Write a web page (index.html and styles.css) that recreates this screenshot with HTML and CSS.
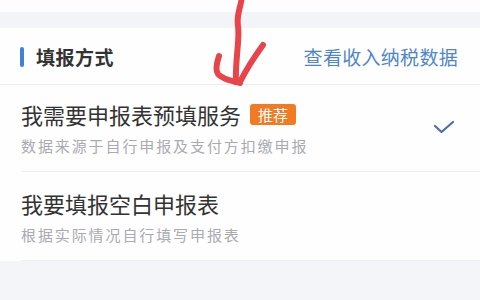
FILE: index.html
```html
<!DOCTYPE html>
<html lang="zh">
<head>
<meta charset="utf-8">
<link rel="stylesheet" href="styles.css">
</head>
<body>
<div class="page">
  <div class="topstrip"></div>
  <div class="band"></div>
  <section class="card">
    <div class="head">
      <div class="head-title"><span class="bar"></span>填报方式</div>
      <a class="head-link">查看收入纳税数据</a>
    </div>
    <div class="option option-first">
      <div class="texts">
        <div class="title">我需要申报表预填服务<span class="badge">推荐</span></div>
        <div class="sub">数据来源于自行申报及支付方扣缴申报</div>
      </div>
      <svg class="check" width="22" height="16" viewBox="0 0 22 16"><path d="M2 6 L8.5 12 L20 2" fill="none" stroke="#4a6db3" stroke-width="2.2" stroke-linecap="round" stroke-linejoin="round"/></svg>
    </div>
    <div class="option">
      <div class="texts">
        <div class="title">我要填报空白申报表</div>
        <div class="sub">根据实际情况自行填写申报表</div>
      </div>
    </div>
  </section>
  <div class="rest"></div>
  <svg class="arrow" width="480" height="120" viewBox="0 0 480 120">
    <path d="M242 -4 C241 8 236 14 238 26 C240 40 235 60 236 82" fill="none" stroke="#e8454b" stroke-width="6" stroke-linecap="round"/>
    <path d="M219 56 C217 62 215 70 218 74 C222 79 232 81 240 83" fill="none" stroke="#e8454b" stroke-width="6" stroke-linecap="round" stroke-linejoin="round"/>
    <path d="M263 45 C255 56 246 70 240 82" fill="none" stroke="#e8454b" stroke-width="6" stroke-linecap="round"/>
  </svg>
</div>
</body>
</html>
```
FILE: styles.css
```css
* { box-sizing: border-box; }
html, body { margin: 0; padding: 0; }
body {
  width: 480px;
  height: 300px;
  overflow: hidden;
  background: #f4f5f9;
  font-family: "Noto Sans CJK SC", "Noto Sans", sans-serif;
}
.page { position: relative; width: 480px; height: 300px; display: flex; flex-direction: column; }
.topstrip { height: 12px; background: #fdfdfd; }
.band { height: 16px; background: #f3f4f8; }
.card { background: #fefefe; }
.head {
  height: 57px;
  display: flex;
  align-items: center;
  justify-content: space-between;
  padding: 1px 22px 0 20px;
  border-bottom: 1px solid #eceef2;
}
.head-title {
  display: flex;
  align-items: center;
  font-size: 19px;
  font-weight: 600;
  color: #333;
  letter-spacing: 0.5px;
}
.bar {
  width: 4px;
  height: 20px;
  border-radius: 2px;
  background: #3f7fe0;
  margin-right: 12px;
}
.head-link {
  font-size: 19px;
  color: #4f86c8;
  letter-spacing: 0.3px;
}
.option {
  margin-left: 21px;
  padding: 16px 25px 14px 0;
  display: flex;
  align-items: center;
  justify-content: space-between;
  border-bottom: 1px solid #eceef2;
}
.option-first { padding-top: 14px; }
.title {
  display: flex;
  align-items: center;
  font-size: 22px;
  line-height: 30px;
  color: #333;
}
.badge {
  margin-left: 9px;
  height: 21px;
  padding: 0 8px;
  border-radius: 3px;
  background: #f27a22;
  color: #fff;
  font-size: 15px;
  line-height: 21px;
}
.sub {
  margin-top: 6px;
  font-size: 15px;
  line-height: 22px;
  letter-spacing: 1.9px;
  color: #a9abb1;
}
.rest { flex: 1; background: #f4f5f9; }
.arrow { position: absolute; left: 0; top: 0; pointer-events: none; }
```
